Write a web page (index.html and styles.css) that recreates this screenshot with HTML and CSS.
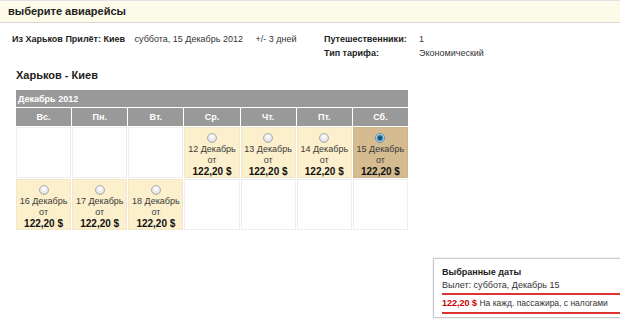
FILE: index.html
```html
<!DOCTYPE html>
<html lang="ru">
<head>
<meta charset="utf-8">
<link rel="stylesheet" href="styles.css">
</head>
<body>
<div class="titlebar">выберите авиарейсы</div>
<div class="info">
  <div class="route-line">
    <b>Из Харьков Прилёт: Киев</b>
    <span class="date">суббота, 15 Декабрь 2012</span>
    <span class="range">+/- 3 дней</span>
  </div>
  <div class="meta">
    <div class="meta-row"><b class="meta-label">Путешественники:</b><span class="meta-val num">1</span></div>
    <div class="meta-row"><b class="meta-label">Тип тарифа:</b><span class="meta-val">Экономический</span></div>
  </div>
</div>
<div class="route">Харьков - Киев</div>
<table class="cal">
  <tr><th class="month" colspan="7">Декабрь 2012</th></tr>
  <tr class="days"><th>Вс.</th><th>Пн.</th><th>Вт.</th><th>Ср.</th><th>Чт.</th><th>Пт.</th><th>Сб.</th></tr>
  <tr>
    <td class="empty"></td><td class="empty"></td><td class="empty"></td>
    <td class="avail"><span class="radio"></span><div>12 Декабрь</div><div>от</div><div class="price">122,20 $</div></td>
    <td class="avail"><span class="radio"></span><div>13 Декабрь</div><div>от</div><div class="price">122,20 $</div></td>
    <td class="avail"><span class="radio"></span><div>14 Декабрь</div><div>от</div><div class="price">122,20 $</div></td>
    <td class="avail sel"><span class="radio on"></span><div>15 Декабрь</div><div>от</div><div class="price">122,20 $</div></td>
  </tr>
  <tr>
    <td class="avail"><span class="radio"></span><div>16 Декабрь</div><div>от</div><div class="price">122,20 $</div></td>
    <td class="avail"><span class="radio"></span><div>17 Декабрь</div><div>от</div><div class="price">122,20 $</div></td>
    <td class="avail"><span class="radio"></span><div>18 Декабрь</div><div>от</div><div class="price">122,20 $</div></td>
    <td class="empty"></td><td class="empty"></td><td class="empty"></td><td class="empty"></td>
  </tr>
</table>
<div class="summary">
  <div class="sum-title">Выбранные даты</div>
  <div class="sum-dep">Вылет: суббота, Декабрь 15</div>
  <div class="sum-price"><b>122,20 $</b> На кажд. пассажира, с налогами</div>
</div>
</body>
</html>
```
FILE: styles.css
```css
* { box-sizing: border-box; }
html, body { margin: 0; padding: 0; }
body {
  font-family: "Liberation Sans", Arial, sans-serif;
  font-size: 9px;
  color: #222;
  background: #fff;
  width: 620px;
  height: 322px;
  overflow: hidden;
  position: relative;
}
.titlebar {
  height: 23px;
  background: #fcfae8;
  border-top: 1px solid #e2e2e2;
  border-bottom: 1px solid #d8d8d8;
  font-size: 11px;
  font-weight: bold;
  color: #222;
  padding: 3px 0 0 8px;
  line-height: 15px;
}
.info {
  display: flex;
  padding: 9px 0 0 12px;
  height: 45px;
}
.route-line { width: 312px; line-height: 14px; white-space: nowrap; }
.route-line .date { margin-left: 7px; color: #333; }
.route-line .range { margin-left: 10px; color: #333; }
.meta { line-height: 14px; }
.meta-row { display: flex; }
.meta-label { width: 95px; }
.meta-val { color: #333; }
.meta-val.num { color: #5a2a5a; }
.route {
  font-size: 11px;
  font-weight: bold;
  padding-left: 16px;
  height: 21px;
  line-height: 14px;
}
.cal {
  margin-left: 15px;
  border-collapse: separate;
  border-spacing: 1px;
  width: 394px;
}
.cal th {
  background: #999;
  color: #fff;
  font-weight: bold;
  font-size: 9px;
  height: 18px;
  padding: 0;
}
.cal th.month { text-align: left; padding-left: 2px; height: 17px; }
.cal td {
  width: 55px;
  height: 51px;
  padding: 2px 0 0;
  text-align: center;
  vertical-align: top;
  font-size: 9px;
  line-height: 11px;
  color: #3a3a3a;
}
.cal td.empty { border: 1px solid #eeeeee; }
.cal td.avail { background: #fcf0cc; border: 1px solid #f1e7cc; }
.cal td.sel { background: #d4bb90; border-color: #cdb488; }
.cal .price { font-size: 10px; font-weight: bold; color: #111; line-height: 11px; }
.radio {
  display: block;
  width: 10px;
  height: 10px;
  margin: 3px auto 1px;
  border-radius: 50%;
  border: 1px solid #a9a9a9;
  background: radial-gradient(circle at 50% 35%, #fff 0, #e6e6e6 60%, #cfcfcf 100%);
}
.radio.on {
  border-color: #6a8fa8;
  background: radial-gradient(circle, #0b3f63 0, #1d6a9a 2px, #5a9fc8 3px, #e8f2f8 4px);
}
.summary {
  position: absolute;
  left: 433px;
  top: 258px;
  width: 200px;
  height: 60px;
  border: 1px solid #c8c8c8;
  box-shadow: 0 0 2px #ddd;
  padding: 7px 0 0 8px;
  background: #fff;
}
.sum-title { font-weight: bold; font-size: 9px; line-height: 13px; }
.sum-dep {
  font-size: 9px;
  line-height: 13px;
  color: #333;
  border-bottom: 2px solid #d33;
  padding-bottom: 1px;
}
.sum-price {
  font-size: 8.5px;
  line-height: 13px;
  padding-top: 2px;
  padding-bottom: 2px;
  border-bottom: 2px solid #d33;
  color: #333;
  white-space: nowrap;
}
.sum-price b { color: #c00; font-size: 9px; }
```
